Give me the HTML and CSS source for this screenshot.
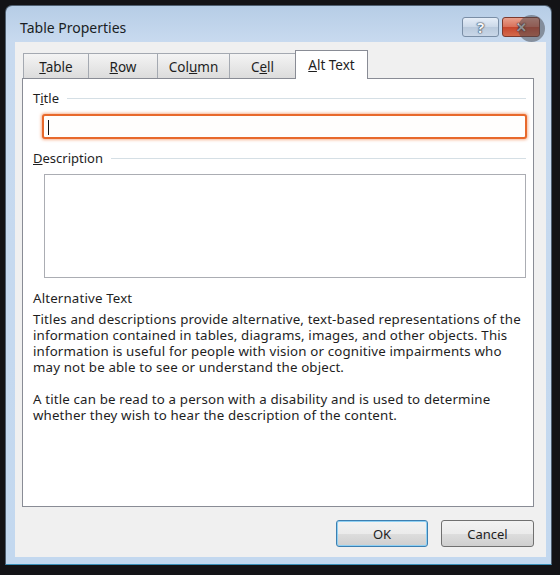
FILE: index.html
```html
<!DOCTYPE html>
<html>
<head>
<meta charset="utf-8">
<link rel="stylesheet" href="styles.css">
</head>
<body>
<div class="window">
  <div class="titlebar">
    <span class="title">Table Properties</span>
    <div class="caption-buttons">
      <span class="cap-btn help">?</span>
      <span class="cap-btn close">✕</span>
    </div>
  </div>
  <div class="cursor-ring"></div>
  <div class="client">
    <div class="tabs">
      <div class="tab tab-table"><span><u>T</u>able</span></div>
      <div class="tab tab-row"><span><u>R</u>ow</span></div>
      <div class="tab tab-column"><span>Col<u>u</u>mn</span></div>
      <div class="tab tab-cell"><span>C<u>e</u>ll</span></div>
      <div class="tab tab-alt selected"><span><u>A</u>lt Text</span></div>
    </div>
    <div class="panel">
      <div class="group-label"><span>T<u>i</u>tle</span></div>
      <div class="title-input"><span class="caret"></span></div>
      <div class="group-label desc-label"><span><u>D</u>escription</span></div>
      <div class="desc-box"></div>
      <div class="heading">Alternative Text</div>
      <p class="para">Titles and descriptions provide alternative, text-based representations of the information contained in tables, diagrams, images, and other objects. This information is useful for people with vision or cognitive impairments who may not be able to see or understand the object.</p>
      <p class="para para-2">A title can be read to a person with a disability and is used to determine whether they wish to hear the description of the content.</p>
    </div>
    <div class="buttons">
      <div class="btn btn-default">OK</div>
      <div class="btn">Cancel</div>
    </div>
  </div>
</div>
</body>
</html>
```
FILE: styles.css
```css
* { box-sizing: border-box; }
html, body { margin: 0; padding: 0; }
body {
  background: #131316;
  width: 560px;
  height: 575px;
  overflow: hidden;
  font-family: "Noto Sans", "Open Sans", sans-serif;
  font-size: 12px;
  color: #1e1e1e;
}
.window {
  position: relative;
  margin: 5px 0 0 5px;
  width: 547px;
  height: 560px;
  border: 1px solid #4f5f70;
  border-bottom-color: #3a8fb8;
  border-radius: 7px 7px 0 0;
  background: linear-gradient(180deg, #b6cde6 0px, #c8daef 36px, #c3d8ef 100%);
  display: flex;
  flex-direction: column;
  padding: 0 5px 7px 9px;
}
.titlebar {
  height: 36px;
  display: flex;
  align-items: flex-start;
  padding: 12px 6px 0 5px;
}
.title {
  font-size: 14px;
  line-height: 20px;
  color: #1a1e24;
}
.caption-buttons {
  margin-left: auto;
  margin-top: -1px;
  display: flex;
  gap: 3px;
}
.cap-btn {
  height: 20px;
  border-radius: 3px;
  display: flex;
  align-items: center;
  justify-content: center;
  font-weight: bold;
  line-height: 1;
}
.help {
  width: 37px;
  border: 1px solid #7a8ea6;
  background: linear-gradient(180deg, #e6eef8 0%, #cbd8e8 50%, #b9c9dc 51%, #c9d7e8 100%);
  color: #f4f7fb;
  font-size: 15px;
  text-shadow: 0 0 1px #34455a, 0 0 1px #34455a, 0 0 2px #34455a;
}
.close {
  width: 38px;
  border: 1px solid #7c3a2e;
  background: linear-gradient(180deg, #e9a08c 0%, #d8705a 50%, #c7452c 51%, #d46a4c 100%);
  color: #d8d8d8;
  font-size: 13px;
  text-shadow: 0 0 1px #3d1a12, 0 0 2px #3d1a12;
}
.cursor-ring {
  position: absolute;
  left: 512px;
  top: 9px;
  width: 27px;
  height: 27px;
  border-radius: 50%;
  background: rgba(70, 70, 75, 0.5);
}
.client {
  flex: 1;
  background: #f0f0f0;
  padding: 8px 12px 0 7px;
  display: flex;
  flex-direction: column;
}
.tabs {
  height: 28px;
  display: flex;
  align-items: flex-end;
  padding-left: 1px;
  position: relative;
  z-index: 1;
}
.tab {
  height: 25px;
  margin-right: -1px;
  border: 1px solid #a4a9b1;
  border-bottom: none;
  background: linear-gradient(180deg, #f4f4f4 0%, #e8e8e8 50%, #dcdcdc 100%);
  display: flex;
  align-items: center;
  justify-content: center;
  padding-top: 2px;
  font-size: 13.5px;
  color: #1e1e1e;
}
.tab-table { width: 66px; }
.tab-row { width: 70px; }
.tab-column { width: 73px; }
.tab-cell { width: 67px; }
.tab-alt { width: 73px; }
.tab.selected {
  height: 29px;
  margin-bottom: -1px;
  background: #ffffff;
  border-color: #898c95;
  padding-top: 0;
  padding-bottom: 1px;
}
.panel {
  height: 429px;
  border: 1px solid #898c95;
  background: #ffffff;
  padding: 11px 7px 0 10px;
  display: flex;
  flex-direction: column;
}
.group-label {
  display: flex;
  align-items: center;
  gap: 8px;
  height: 16px;
  font-size: 13px;
  line-height: 16px;
}
.group-label::after {
  content: "";
  flex: 1;
  height: 1px;
  background: #d5dfe5;
}
.title-input {
  margin: 8px 0 0 9px;
  height: 25px;
  margin-right: -1px;
  border: 2px solid #e8692c;
  border-radius: 3px;
  background: #fffefd;
  box-shadow: 0 0 3px 1px rgba(240, 120, 60, 0.55);
  padding: 4px 0 0 4px;
}
.caret {
  display: block;
  width: 1px;
  height: 15px;
  background: #111;
}
.desc-label { margin-top: 11px; }
.desc-box {
  margin: 8px 0 0 11px;
  height: 104px;
  border: 1px solid #abadb3;
  background: #fff;
}
.heading {
  margin-top: 12px;
  line-height: 16px;
  font-size: 13.3px;
  letter-spacing: 0.15px;
}
.para {
  margin: 5px 0 0 0;
  line-height: 16px;
  font-size: 13.3px;
  letter-spacing: 0.15px;
  padding-right: 0;
}
.para-2 { margin-top: 16px; }
.buttons {
  margin-top: 13px;
  display: flex;
  justify-content: flex-end;
  gap: 13px;
}
.btn {
  width: 93px;
  height: 27px;
  border: 1px solid #707070;
  border-radius: 3px;
  background: linear-gradient(180deg, #f2f2f2 0%, #ebebeb 50%, #dddddd 51%, #cfcfcf 100%);
  display: flex;
  align-items: center;
  justify-content: center;
  font-size: 13px;
  color: #1e1e1e;
}
.btn-default {
  width: 92px;
  border-color: #3c7fb1;
  box-shadow: inset 0 0 0 1px #8fd0f3;
}
```
